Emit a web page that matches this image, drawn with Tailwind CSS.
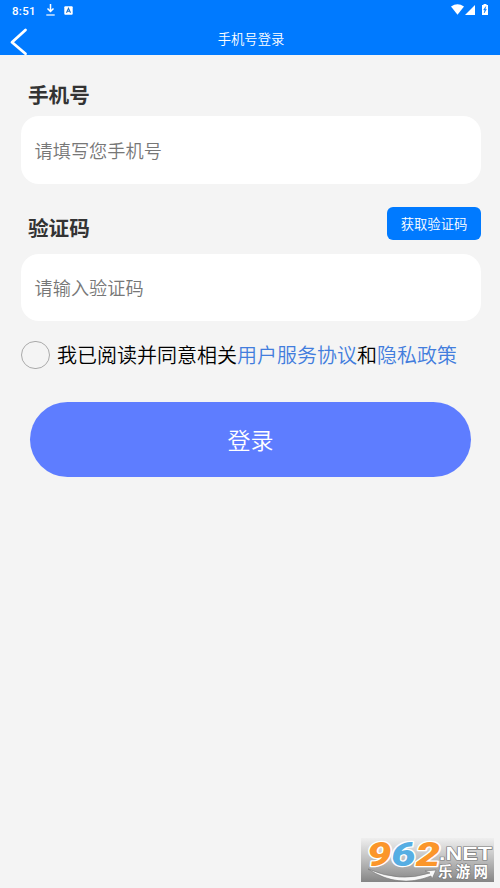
<!DOCTYPE html>
<html lang="zh-CN">
<head>
<meta charset="utf-8">
<title>手机号登录</title>
<script src="https://cdn.jsdelivr.net/npm/@tailwindcss/browser@4"></script>
</head>
<body class="relative flex h-[888px] w-[500px] flex-col overflow-hidden bg-[#f4f4f4] font-['Noto_Sans_CJK_SC',sans-serif] font-[350]">
<header class="h-[55px] shrink-0 bg-[#007aff] text-white">
  <div class="flex h-5 items-center pr-[11px] pl-3">
    <span class="w-[34px] pt-px font-['Roboto',sans-serif] text-[11.5px] leading-5 font-medium tracking-[0.3px]">8:51</span>
    <svg class="h-3 w-[9px]" viewBox="0 0 9 12" fill="none" stroke="white"><path d="M4.5 0v7M1.5 4.5l3 3 3-3" stroke-width="1.5"/><path d="M.3 11h8.4" stroke-width="1.2"/></svg>
    <svg class="ml-[9px] h-[9px] w-[9px]" viewBox="0 0 9 9"><rect x=".3" y=".2" width="8.4" height="8.6" rx="1" fill="white"/><path d="M2.5 6.8l2-4.5 2 4.5M3.2 5.3h2.6" fill="none" stroke="#176fc9" stroke-width="1.1"/></svg>
    <svg class="mr-px mb-px ml-auto h-[11px] w-[13px]" viewBox="0 0 13 11"><path d="M0 2.4Q6.5-2 13 2.4L6.5 10.7z" fill="white"/></svg>
    <svg class="h-[10px] w-[10px]" viewBox="0 0 10 10"><path d="M10 0v10H0z" fill="white"/></svg>
    <svg class="mr-px mb-px ml-[7px] h-[11px] w-[6px]" viewBox="0 0 6 11"><path d="M1.5 0h3v1H6v10H0V1h1.5z" fill="white"/><path d="M3.8 2.6L1.6 6H3l-.8 3 2.2-3.8H3z" fill="#007aff" stroke="#007aff" stroke-width=".5"/></svg>
  </div>
  <div class="grid h-[35px] grid-cols-[60px_1fr_60px] items-center">
    <svg class="mt-[8px] ml-[10px] h-[28px] w-[18px]" viewBox="0 0 18 28" fill="none" stroke="white" stroke-width="2.8" stroke-linecap="round" stroke-linejoin="round"><path d="M15.5 2L2 14.2l13.5 11.6"/></svg>
    <h1 class="mt-px ml-[2px] text-center text-[13.3px] leading-5 font-[350]">手机号登录</h1>
  </div>
</header>
<main class="flex flex-col pr-[19px] pl-[21px]">
  <label class="mt-[24px] ml-[7px] h-[30px] text-[20.6px] leading-[30px] font-bold text-[#333]">手机号</label>
  <div class="mt-[7px] flex h-[68px] items-center rounded-[18px] bg-white pt-px pl-[13.5px] text-[18.2px] text-[#777]">请填写您手机号</div>
  <div class="mt-[23px] flex h-[33px] items-start justify-between">
    <label class="mt-[5px] ml-[7px] text-[20.6px] leading-[30px] font-bold text-[#333]">验证码</label>
    <button class="h-[33px] w-[94px] rounded-[6px] bg-[#007aff] text-[13.3px] font-[350] text-white">获取验证码</button>
  </div>
  <div class="mt-[14px] flex h-[67px] items-center rounded-[18px] bg-white pt-px pl-[13.5px] text-[18.2px] text-[#777]">请输入验证码</div>
  <div class="mt-[20px] flex h-[28px] items-center">
    <span class="h-[28px] w-[29px] rounded-full border border-[#aaa]"></span>
    <p class="ml-[7px] text-[20px] leading-7 whitespace-nowrap text-black">我已阅读并同意相关<a class="text-[#427ddd]">用户服务协议</a>和<a class="text-[#427ddd]">隐私政策</a></p>
  </div>
  <button class="mt-[33px] mr-[10px] ml-[9px] h-[75px] rounded-full bg-[#5e7dff] pb-px text-[23px] font-[350] text-white">登录</button>
</main>
<aside class="absolute top-[838px] left-[361px] h-[44px] w-[133px]">
  <svg class="h-full w-full overflow-visible" viewBox="0 0 133 44">
    <defs><linearGradient id="bg" x1="0" y1="0" x2="0" y2="1"><stop stop-color="#efefef"/><stop offset=".5" stop-color="#bdbdbd"/><stop offset="1" stop-color="#858585"/></linearGradient></defs>
    <rect width="133" height="44" fill="url(#bg)"/>
    <path d="M7 31Q39 45 69 35L64 33l11-1-4 9-1-3Q37 51 7 31z" fill="#f7f7f7" stroke="#777" stroke-width=".6"/>
    <g font-family="Roboto, sans-serif" font-weight="900" font-style="italic" font-size="34" stroke="#fff" stroke-width="2.6" paint-order="stroke" stroke-linejoin="round">
      <text x="6" y="28" textLength="73" lengthAdjust="spacingAndGlyphs"><tspan fill="#fb962b">9</tspan><tspan fill="#56aee3">6</tspan><tspan fill="#fb962b">2</tspan></text>
    </g>
    <g fill="#fff" stroke="#777" stroke-width="1.2" paint-order="stroke" font-weight="bold">
      <text x="78" y="21.5" textLength="53" lengthAdjust="spacingAndGlyphs" font-family="Liberation Sans, sans-serif" font-size="18">.NET</text>
      <text x="77" y="39" textLength="50" font-family="Noto Sans CJK SC, sans-serif" font-size="14.5">乐游网</text>
    </g>
  </svg>
</aside>
</body>
</html>
